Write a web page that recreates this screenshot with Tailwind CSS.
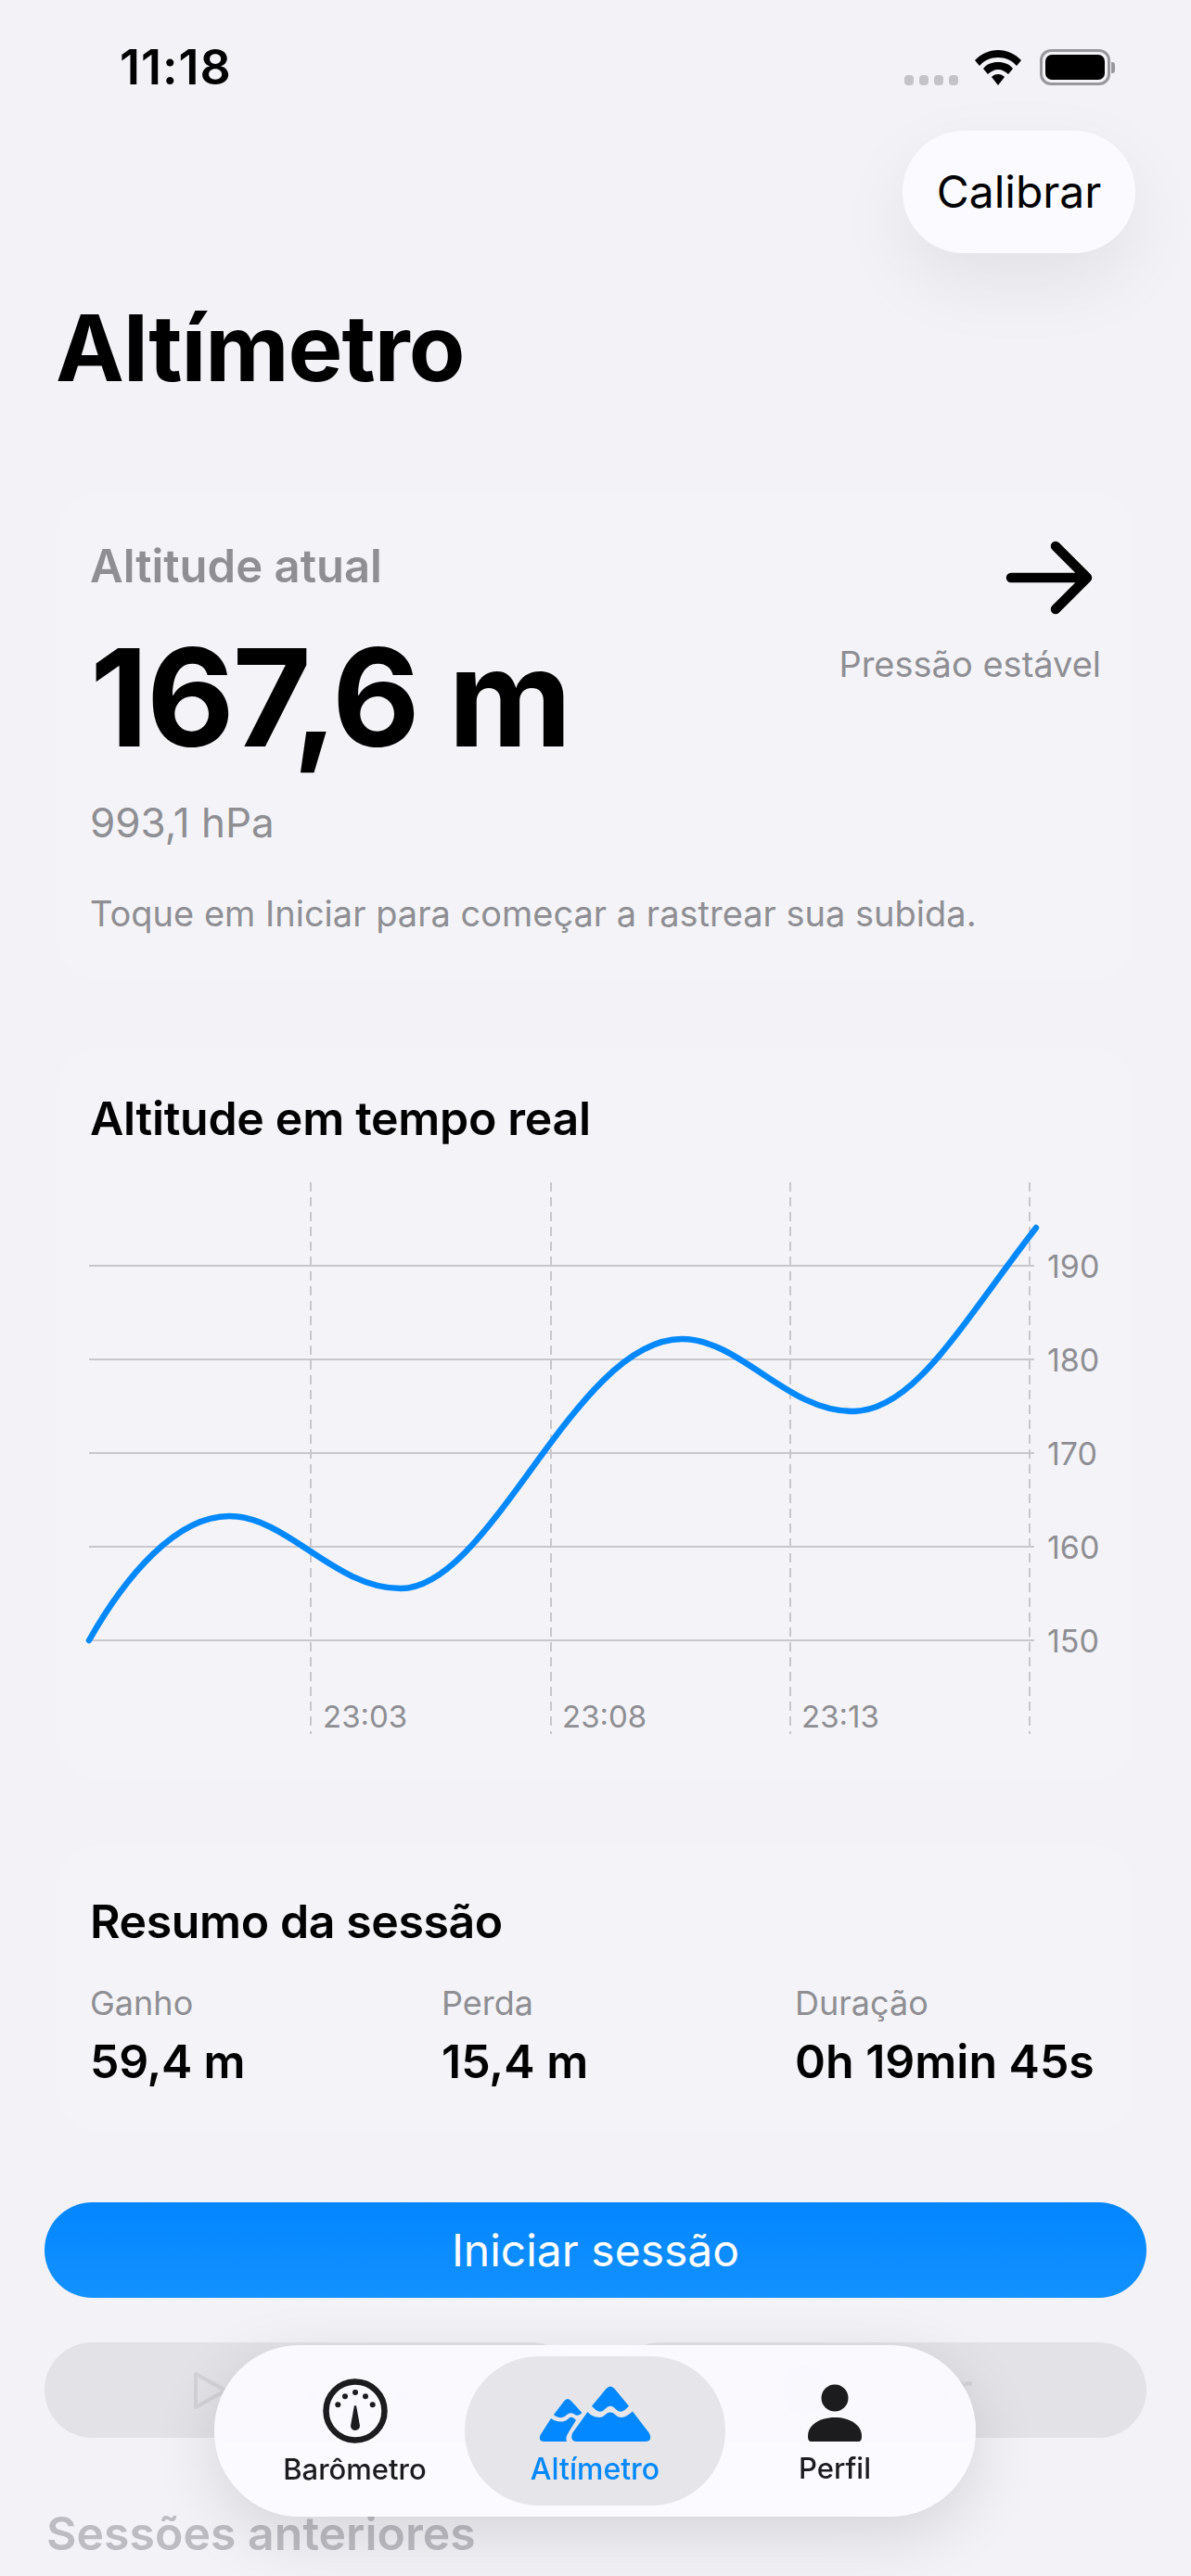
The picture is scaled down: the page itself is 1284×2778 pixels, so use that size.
<!DOCTYPE html>
<html lang="en">
<head>
    <meta charset="UTF-8">
    <meta name="viewport" content="width=device-width, initial-scale=1.0">
    <title>Altímetro</title>
    <script src="https://cdn.jsdelivr.net/npm/@tailwindcss/browser@4"></script>
</head>
<body class="bg-[#f2f2f7] font-['Inter','Noto_Sans',sans-serif] text-black">
    <div class="relative w-[1284px] h-[2778px] overflow-hidden">
        <!-- Status bar -->
        <div class="flex items-start justify-between h-[141px] pl-[129px] pr-[82px] pt-[53px]">
            <span class="text-[52px] leading-[39px] font-semibold tracking-[1px]">11:18</span>
            <div class="flex items-end h-[39px]">
                <div class="flex gap-[6px] mr-[18px]">
                    <span class="w-[10px] h-[11px] rounded-[4px] bg-[#c4c4c8]"></span>
                    <span class="w-[10px] h-[11px] rounded-[4px] bg-[#c4c4c8]"></span>
                    <span class="w-[10px] h-[11px] rounded-[4px] bg-[#c4c4c8]"></span>
                    <span class="w-[10px] h-[11px] rounded-[4px] bg-[#c4c4c8]"></span>
                </div>
                <svg width="50" height="38" viewBox="0 0 50 38" class="mr-[20px]">
                    <path d="M25 0C15 0 7 4 0 11l5 6C10 11 17 8 25 8s15 3 20 9l5-6C43 4 35 0 25 0z" fill="#000"/>
                    <path d="M25 13c-7 0-12 2-16 7l5 6c3-3 7-5 11-5s8 2 11 5l5-6c-4-5-9-7-16-7z" fill="#000"/>
                    <path d="M25 26c-3 0-5 1-7 3l7 9 7-9c-2-2-4-3-7-3z" fill="#000"/>
                </svg>
                <div class="flex items-center">
                    <div class="w-[76px] h-[39px] rounded-[12px] border-[3px] border-[#98989c] p-[3px]">
                        <div class="w-full h-full rounded-[7px] bg-black"></div>
                    </div>
                    <div class="w-[4px] h-[12px] ml-[1px] rounded-r-[3px] bg-[#98989c]"></div>
                </div>
            </div>
        </div>

        <!-- Calibrar -->
        <div class="flex justify-end pr-[60px]">
            <button class="w-[251px] h-[132px] rounded-[66px] bg-[#fbfbff] text-[48px] shadow-[0_30px_80px_rgba(0,0,0,0.07)]">Calibrar</button>
        </div>

        <h1 class="ml-[60px] mt-[44px] text-[99px] leading-[116px] font-bold tracking-[-1px]">Altímetro</h1>

        <div class="flex flex-col gap-[72px] mt-[98px] px-[60px]">
            <!-- Current altitude -->
            <section class="h-[527px] rounded-[48px] bg-[#f4f4f8] px-[37px] pt-[52px]">
                <div class="flex justify-between">
                    <div>
                        <p class="text-[49px] leading-[56px] font-semibold text-[#8e8e93]">Altitude atual</p>
                        <p class="mt-[33px] text-[146px] leading-[160px] font-bold tracking-[-2px]">167,6 m</p>
                    </div>
                    <div class="flex flex-col items-end">
                        <svg width="100" height="80" viewBox="0 0 100 80" class="mr-[5px]">
                            <path d="M8 40H90M56 6L90 40L56 74" fill="none" stroke="#000" stroke-width="10.500" stroke-linecap="round" stroke-linejoin="round"/>
                        </svg>
                        <p class="mt-[29px] text-[38px] leading-[48px] text-[#8e8e93]">Pressão estável</p>
                    </div>
                </div>
                <p class="mt-[28px] text-[44px] leading-[54px] text-[#8e8e93]">993,1 hPa</p>
                <p class="mt-[47px] text-[38px] leading-[48px] text-[#8e8e93]">Toque em Iniciar para começar a rastrear sua subida.</p>
            </section>

            <!-- Chart -->
            <section class="h-[790px] rounded-[48px] bg-[#f4f4f8] pt-[46px]">
                <h2 class="ml-[37px] text-[50px] leading-[60px] font-semibold tracking-[-0.3px]">Altitude em tempo real</h2>
                <svg width="1164" height="600" viewBox="60 1270 1164 600" class="mt-[34px] block">
                    <g stroke="#c8c8cc" stroke-width="2">
                        <path d="M96 1365H1115"/>
                        <path d="M96 1466H1115"/>
                        <path d="M96 1567H1115"/>
                        <path d="M96 1668H1115"/>
                        <path d="M96 1769H1115"/>
                    </g>
                    <g stroke="#c8c8cc" stroke-width="2" stroke-dasharray="10 6">
                        <path d="M335 1275V1870"/>
                        <path d="M594 1275V1870"/>
                        <path d="M852 1275V1870"/>
                        <path d="M1110 1275V1870"/>
                    </g>
                    <path d="M96 1769C135 1700 190 1635 247 1635C310 1635 360 1713 432 1713C530 1713 620 1444 735 1444C798 1444 848 1522 919 1522C985 1522 1035 1430 1117 1324" fill="none" stroke="#0488ff" stroke-width="6.500" stroke-linecap="round"/>
                    <g fill="#8e8e93" font-size="34">
                        <text x="1129" y="1378">190</text>
                        <text x="1129" y="1479">180</text>
                        <text x="1129" y="1580">170</text>
                        <text x="1129" y="1681">160</text>
                        <text x="1129" y="1782">150</text>
                        <text x="348" y="1863" font-size="33">23:03</text>
                        <text x="606" y="1863" font-size="33">23:08</text>
                        <text x="864" y="1863" font-size="33">23:13</text>
                    </g>
                </svg>
            </section>
        </div>

        <div class="flex flex-col mt-[70px] px-[60px]">
            <!-- Session summary -->
            <section class="h-[310px] rounded-[48px] bg-[#f4f4f8] px-[37px] pt-[52px]">
                <h2 class="text-[50px] leading-[60px] font-semibold tracking-[-0.4px]">Resumo da sessão</h2>
                <div class="grid grid-cols-[379px_381px_1fr] mt-[36px]">
                    <div>
                        <p class="text-[36px] leading-[44px] text-[#8e8e93]">Ganho</p>
                        <p class="mt-[11px] text-[50px] leading-[60px] font-semibold tracking-[-0.3px]">59,4 m</p>
                    </div>
                    <div>
                        <p class="text-[36px] leading-[44px] text-[#8e8e93]">Perda</p>
                        <p class="mt-[11px] text-[50px] leading-[60px] font-semibold">15,4 m</p>
                    </div>
                    <div>
                        <p class="text-[36px] leading-[44px] text-[#8e8e93]">Duração</p>
                        <p class="mt-[11px] text-[50px] leading-[60px] font-semibold whitespace-nowrap">0h 19min 45s</p>
                    </div>
                </div>
            </section>
        </div>

        <!-- Actions -->
        <div class="flex flex-col gap-[48px] mt-[75px] px-[48px]">
            <button class="h-[103px] rounded-[52px] bg-gradient-to-b from-[#0386ff] to-[#1291ff] text-[48px] text-white">Iniciar sessão</button>
            <div class="flex gap-[36px] h-[103px]">
                <div class="flex-1 flex items-center justify-center gap-[36px] rounded-[52px] bg-[#e2e2e7] text-[56px] text-[#d2d2d7]">
                    <svg width="38" height="42" viewBox="0 0 38 42">
                        <path d="M3 3L35 21L3 39Z" fill="none" stroke="#d2d2d7" stroke-width="4" stroke-linejoin="round"/>
                    </svg>
                    <span>Pausar</span>
                </div>
                <div class="flex-1 flex items-center justify-center gap-[36px] rounded-[52px] bg-[#e2e2e7] text-[50px] text-[#d2d2d7]">
                    <span class="w-[40px] h-[48px] rounded-[6px] bg-[#d2d2d7]"></span>
                    <span>Parar</span>
                </div>
            </div>
        </div>
        <h2 class="ml-[50px] mt-[73px] text-[50px] leading-[60px] font-semibold text-[#bcbcc2]">Sessões anteriores</h2>

        <!-- Tab bar -->
        <nav class="absolute left-[231px] top-[2529px] w-[821px] h-[185px] rounded-[92px] bg-[#fafaff]/95 backdrop-blur-[8px] shadow-[0_20px_70px_rgba(0,0,0,0.12)] flex items-center">
            <div class="w-[270px] pl-[33px] flex flex-col items-center">
                <svg width="70" height="70" viewBox="0 0 70 70" class="mt-[3px]">
                    <circle cx="35" cy="35" r="31.5" fill="none" stroke="#1c1c1e" stroke-width="6.5"/>
                    <circle cx="35" cy="15" r="3" fill="#1c1c1e"/>
                    <circle cx="24" cy="19.300" r="3" fill="#1c1c1e"/>
                    <circle cx="46" cy="19.300" r="3" fill="#1c1c1e"/>
                    <circle cx="16.300" cy="28.300" r="3" fill="#1c1c1e"/>
                    <circle cx="53.700" cy="28.300" r="3" fill="#1c1c1e"/>
                    <path d="M33.800 30Q35 28 36.200 30L40 51A5 5 0 1 1 30 51Z" fill="#1c1c1e"/>
                </svg>
                <span class="mt-[10px] text-[31px] leading-[36px] font-medium text-[#1c1c1e]">Barômetro</span>
            </div>
            <div class="w-[281px] h-[161px] rounded-[80px] bg-[#e6e6ea] flex flex-col items-center justify-center">
                <svg width="122" height="60" viewBox="0 0 122 60" class="mt-[10px]">
                    <!-- left peak -->
                    <path d="M16 31L27 16.500Q31 11.500 35 16.500L46.500 29C44 31 42 33 39 31C35 28 32 29 29 32C26 35 20 35 16 31Z" fill="#0488ff"/>
                    <path d="M13 35C18 39 26 40 31 36C34 33 36 33 40 37L32 50C29 55 29 57 30 60H6Q-1 60 1.500 53Z" fill="#0488ff"/>
                    <!-- right peak -->
                    <path d="M57 21.700L72.500 3Q77 -2 81.500 3L97 21.700C94 25 91 27.700 88 27.700C83 27.700 82 21.700 77 21.700C72 21.700 71 27.700 66 27.700C63 27.700 60 25 57 21.700Z" fill="#0488ff"/>
                    <path d="M52.500 28C56 32 60 34 65 34C71 34 72 28.500 77 28.500C82 28.500 83 34 89 34C93 34 97 31 101 27.500L119 51Q123 60 114 60H41Q33 60 36 51Z" fill="#0488ff"/>
                </svg>
                <span class="mt-[12px] text-[32px] leading-[36px] font-medium text-[#0488ff]">Altímetro</span>
            </div>
            <div class="w-[270px] pr-[34px] flex flex-col items-center">
                <svg width="58" height="62" viewBox="0 0 58 62" class="mt-[8px]">
                    <circle cx="29" cy="15" r="14.500" fill="#1c1c1e"/>
                    <path d="M0 56C0 44 13 36 29 36S58 44 58 56C58 60 57 62 54 62H4C1 62 0 60 0 56Z" fill="#1c1c1e"/>
                </svg>
                <span class="mt-[11px] text-[31px] leading-[36px] font-medium text-[#1c1c1e]">Perfil</span>
            </div>
        </nav>
    </div>
</body>
</html>
